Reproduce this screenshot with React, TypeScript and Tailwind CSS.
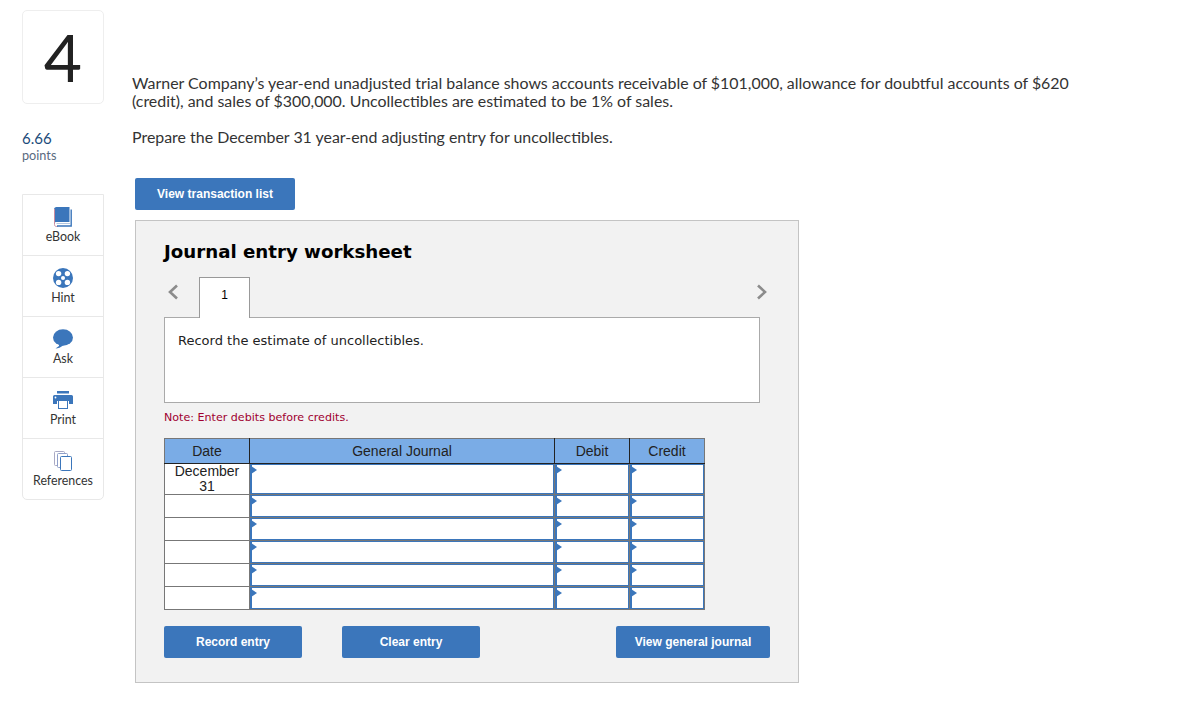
const sideItems = [
  { label: "eBook", icon: <BookIcon /> },
  { label: "Hint", icon: <HintIcon /> },
  { label: "Ask", icon: <AskIcon /> },
  { label: "Print", icon: <PrintIcon /> },
  { label: "References", icon: <RefsIcon /> },
]

const rowHeights = ["h-[30px]", "h-[23px]", "h-[23px]", "h-[23px]", "h-[23px]", "h-[23px]"]

function BookIcon() {
  return (
    <svg width="18" height="20" viewBox="0 0 18 20">
      <path d="M0 2.500C0 1 1 0 2.500 0H15.500V15H2.500C1.500 15 0 15.500 0 17z" fill="#3b76bb" />
      <path d="M.5 2V17.500C.5 19 1.500 19.500 2.500 19.500H4" fill="none" stroke="#c98ca0" strokeWidth="1" />
      <path d="M2.500 16.500H16" fill="none" stroke="#9fb8d8" strokeWidth="0.800" />
      <path d="M3 19H17.200V2.500" fill="none" stroke="#3b76bb" strokeWidth="1.400" />
    </svg>
  )
}

function HintIcon() {
  return (
    <svg width="20" height="20" viewBox="0 0 20 20">
      <circle cx="10" cy="10" r="10" fill="#3b76bb" />
      <circle cx="5.600" cy="5.600" r="2.700" fill="#fff" />
      <circle cx="14.400" cy="5.600" r="2.700" fill="#fff" />
      <circle cx="5.600" cy="14.400" r="2.700" fill="#fff" />
      <circle cx="14.400" cy="14.400" r="2.700" fill="#fff" />
      <circle cx="10" cy="10" r="2" fill="#fff" />
    </svg>
  )
}

function AskIcon() {
  return (
    <svg width="20" height="20" viewBox="0 0 20 20">
      <ellipse cx="10" cy="8.500" rx="10" ry="8.300" fill="#3b76bb" />
      <path d="M6 14 L6 17 L2.500 19.500 C5 19.500 8 18.500 10.500 16z" fill="#3b76bb" />
    </svg>
  )
}

function PrintIcon() {
  return (
    <svg width="20" height="18" viewBox="0 0 20 18">
      <rect x="4" y="0" width="12" height="2.500" fill="#3b76bb" />
      <path d="M1.500 4h17A1.500 1.500 0 0 1 20 5.500V13h-4V10H4v3H0V5.500A1.500 1.500 0 0 1 1.500 4z" fill="#3b76bb" />
      <circle cx="2.500" cy="6.500" r="0.900" fill="#fff" />
      <rect x="5.500" y="9.500" width="9" height="8" fill="#fff" stroke="#3b76bb" />
    </svg>
  )
}

function RefsIcon() {
  return (
    <svg width="18" height="20" viewBox="0 0 18 20">
      <rect x="0.500" y="0.500" width="10" height="14" rx="1" fill="#fff" stroke="#a9a9c4" />
      <rect x="3.500" y="2.500" width="10" height="14" rx="1" fill="#fff" stroke="#8f9fc9" />
      <rect x="6.500" y="5.500" width="11" height="14" rx="1" fill="#fff" stroke="#3b76bb" />
    </svg>
  )
}

function Chevron({ dir }: { dir: "left" | "right" }) {
  return (
    <svg width="12" height="16" viewBox="0 0 12 16">
      <polyline
        points={dir === "left" ? "10,1.500 3,8 10,14.500" : "2,1.500 9,8 2,14.500"}
        fill="none"
        stroke="#8c8c8c"
        strokeWidth="2.600"
      />
    </svg>
  )
}

function InputCell() {
  return (
    <td className="h-full border border-[#777] p-0">
      <div className="relative h-full border border-l-2 border-[#3b76bb] bg-white">
        <span className="absolute left-[-1px] top-[1px] border-y-[4px] border-l-[6px] border-y-transparent border-l-[#3b76bb]" />
      </div>
    </td>
  )
}

function ActionButton({ label, width }: { label: string; width: string }) {
  return (
    <button className={`${width} h-8 rounded-[2px] bg-[#3b76bb] text-center font-['Liberation_Sans',sans-serif] text-[12px] font-bold text-white`}>
      {label}
    </button>
  )
}

export default function App() {
  return (
    <div className="flex h-[708px] w-[1187px] bg-white pl-[22px] pt-[10px] font-['Lato',sans-serif] text-[#333]">
      <div className="w-[82px] shrink-0">
        <div className="flex h-[94px] items-center justify-center rounded-[5px] border border-[#eee] text-[66px] leading-none text-[#222]">
          4
        </div>
        <div className="mt-[26px] text-[15px] leading-[17px] text-[#1a4a7a]">6.66</div>
        <div className="mt-[1px] text-[12.700px] leading-[15px] text-[#5a6a80]">points</div>
        <div className="mt-[31px] rounded-b-[5px] border border-[#e8e8e8]">
          {sideItems.map((item, i) => (
            <div key={item.label} className={`flex flex-col items-center pt-[12px] ${i > 0 ? "h-[61px] border-t border-[#e8e8e8]" : "h-[60px]"}`}>
              <div className="flex h-[20px] items-center">{item.icon}</div>
              <div className="mt-[3px] text-[12.400px] leading-[14px] text-[#333]">{item.label}</div>
            </div>
          ))}
        </div>
      </div>

      <div className="ml-[28px] w-[960px]">
        <div className="mt-[64px] text-[15.930px] leading-[18px] text-[#333]">
          <p>
            Warner Company’s year-end unadjusted trial balance shows accounts receivable of $101,000, allowance for doubtful accounts of $620
            (credit), and sales of $300,000. Uncollectibles are estimated to be 1% of sales.
          </p>
          <p className="mt-[18px]">Prepare the December 31 year-end adjusting entry for uncollectibles.</p>
        </div>

        <button className="ml-[3px] mt-[32px] h-8 w-40 rounded-[2px] bg-[#3b76bb] font-['Liberation_Sans',sans-serif] text-[12px] font-bold text-white">
          View transaction list
        </button>

        <div className="ml-[3px] mt-[10px] h-[463px] w-[664px] border border-[#c4c4c4] bg-[#f2f2f2] px-[28px] pt-[19px]">
          <h2 className="font-['DejaVu_Sans',sans-serif] text-[18.200px] font-bold leading-[24px] text-black">Journal entry worksheet</h2>

          <div className="mt-[13px] flex h-[40px] items-start">
            <div className="ml-[3px] mt-[7px]">
              <Chevron dir="left" />
            </div>
            <div className="relative z-10 ml-[20px] h-[41px] w-[51px] border border-b-0 border-[#999] bg-white pt-[8px] text-center font-['Liberation_Sans',sans-serif] text-[12px] text-black">
              1
            </div>
            <div className="ml-auto mr-[2px] mt-[7px]">
              <Chevron dir="right" />
            </div>
          </div>

          <div className="h-[86px] w-[596px] border border-[#aaa] bg-white px-[13px] pt-[14px] font-['DejaVu_Sans',sans-serif] text-[13px] leading-[17px] text-[#222]">
            Record the estimate of uncollectibles.
          </div>

          <p className="mt-[8px] font-['DejaVu_Sans',sans-serif] text-[11.100px] leading-[14px] text-[#a00030]">Note: Enter debits before credits.</p>

          <table className="mt-[13px] h-[171px] w-[540px] table-fixed border-collapse bg-white font-['Liberation_Sans',sans-serif] text-[14px] text-[#222]">
            <thead>
              <tr className="h-[25px] bg-[#7aace6]">
                <th className="w-[85px] border border-[#222] border-l-[#777] border-t-[#777] p-0 font-normal">Date</th>
                <th className="w-[305px] border border-[#222] border-t-[#777] p-0 font-normal">General Journal</th>
                <th className="w-[75px] border border-[#222] border-t-[#777] p-0 font-normal">Debit</th>
                <th className="w-[75px] border border-[#222] border-r-[#777] border-t-[#777] p-0 font-normal">Credit</th>
              </tr>
            </thead>
            <tbody>
              {rowHeights.map((h, i) => (
                <tr key={i} className={h}>
                  <td className="border border-[#777] px-2 py-0 text-center leading-[15px]">{i === 0 ? "December 31" : ""}</td>
                  <InputCell />
                  <InputCell />
                  <InputCell />
                </tr>
              ))}
            </tbody>
          </table>

          <div className="mt-[16px] flex w-[606px]">
            <ActionButton label="Record entry" width="w-[138px]" />
            <div className="ml-[40px]">
              <ActionButton label="Clear entry" width="w-[138px]" />
            </div>
            <div className="ml-auto">
              <ActionButton label="View general journal" width="w-[154px]" />
            </div>
          </div>
        </div>
      </div>
    </div>
  )
}
